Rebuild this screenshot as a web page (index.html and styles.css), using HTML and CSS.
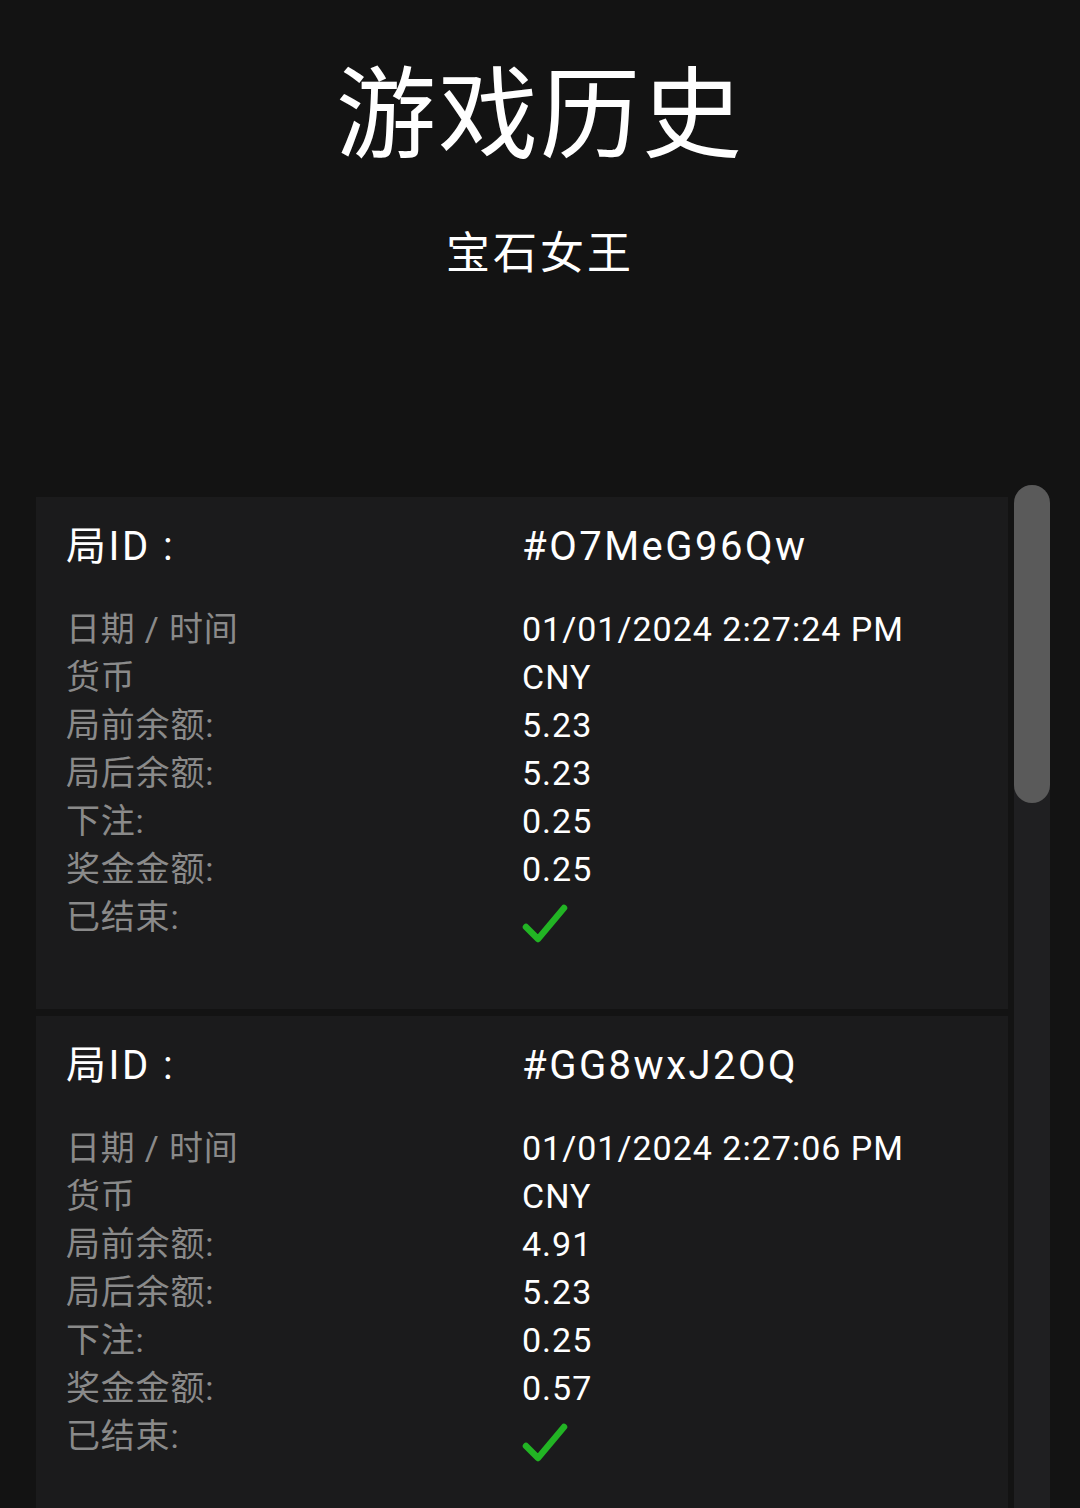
FILE: index.html
```html
<!DOCTYPE html>
<html lang="zh-CN">
  <head>
    <meta charset="utf-8">
    <title>游戏历史 | 宝石女王</title>
    <link rel="stylesheet" href="styles.css">
  </head>
  <body>
    <div class="page-head">
      <h1 class="page-title">游戏历史</h1>
      <div class="game-name">宝石女王</div>
    </div>

    <div class="history">
      <div class="history-list">
        <div class="round-card">
          <div class="round-id">
            <span>局ID :</span>
            <span>#O7MeG96Qw</span>
          </div>
          <div class="round-rows">
            <span class="label">日期 / 时间</span><span class="value">01/01/2024 2:27:24 PM</span>
            <span class="label">货币</span><span class="value">CNY</span>
            <span class="label">局前余额:</span><span class="value">5.23</span>
            <span class="label">局后余额:</span><span class="value">5.23</span>
            <span class="label">下注:</span><span class="value">0.25</span>
            <span class="label">奖金金额:</span><span class="value">0.25</span>
            <span class="label">已结束:</span>
            <span class="value">
              <svg class="tick" width="46" height="40" viewBox="0 0 46 40"><path d="M4 23 L16 35 L42 4" fill="none" stroke="#22b424" stroke-width="6.5" stroke-linecap="round" stroke-linejoin="round"/></svg>
            </span>
          </div>
        </div>

        <div class="round-card">
          <div class="round-id">
            <span>局ID :</span>
            <span>#GG8wxJ2OQ</span>
          </div>
          <div class="round-rows">
            <span class="label">日期 / 时间</span><span class="value">01/01/2024 2:27:06 PM</span>
            <span class="label">货币</span><span class="value">CNY</span>
            <span class="label">局前余额:</span><span class="value">4.91</span>
            <span class="label">局后余额:</span><span class="value">5.23</span>
            <span class="label">下注:</span><span class="value">0.25</span>
            <span class="label">奖金金额:</span><span class="value">0.57</span>
            <span class="label">已结束:</span>
            <span class="value">
              <svg class="tick" width="46" height="40" viewBox="0 0 46 40"><path d="M4 23 L16 35 L42 4" fill="none" stroke="#22b424" stroke-width="6.5" stroke-linecap="round" stroke-linejoin="round"/></svg>
            </span>
          </div>
        </div>
      </div>

      <!-- 스크롤바 모양만 -->
      <div class="scroll-track">
        <div class="scroll-thumb"></div>
      </div>
    </div>
  </body>
</html>
```

FILE: styles.css
```css
html, body {
  margin: 0;
  padding: 0;
  background: #131313;
  color: #fff;
  font-family: Roboto, "Noto Sans CJK SC", sans-serif;
}
.page-head {
  text-align: center;
  padding-top: 56px;
  height: 429px;
  box-sizing: border-box;
}
.page-title {
  margin: 0;
  font-size: 100px;
  font-weight: 400;
  line-height: 120px;
  letter-spacing: 2px;
}
.game-name {
  margin-top: 50px;
  font-size: 44px;
  line-height: 56px;
  letter-spacing: 3px;
}
.history {
  display: flex;
  align-items: stretch;
  padding: 56px 30px 0 36px;
  gap: 6px;
  height: 1079px;
  box-sizing: border-box;
  overflow: hidden;
}
.history-list {
  flex: 1;
  display: flex;
  flex-direction: column;
  gap: 7px;
  padding-top: 12px;
}
.round-card {
  background: #1b1b1c;
  padding: 26px 30px 68px;
  height: 512px;
  box-sizing: border-box;
  flex-shrink: 0;
}
.round-id {
  display: grid;
  grid-template-columns: 1fr 1fr;
  font-size: 40px;
  line-height: 48px;
  letter-spacing: 2.5px;
  margin-bottom: 34px;
}
.round-rows {
  display: grid;
  grid-template-columns: 1fr 1fr;
  font-size: 34px;
  line-height: 48px;
}
.label {
  color: #8a8a8a;
  letter-spacing: 0.8px;
}
.value {
  color: #fff;
  letter-spacing: 1px;
}
.tick {
  display: block;
  margin-top: 11px;
}
.scroll-track {
  width: 36px;
  flex-shrink: 0;
  background: #1f1f21;
  border-radius: 18px 18px 0 0;
}
.scroll-thumb {
  height: 318px;
  background: #5a5a5a;
  border-radius: 18px;
}
```
